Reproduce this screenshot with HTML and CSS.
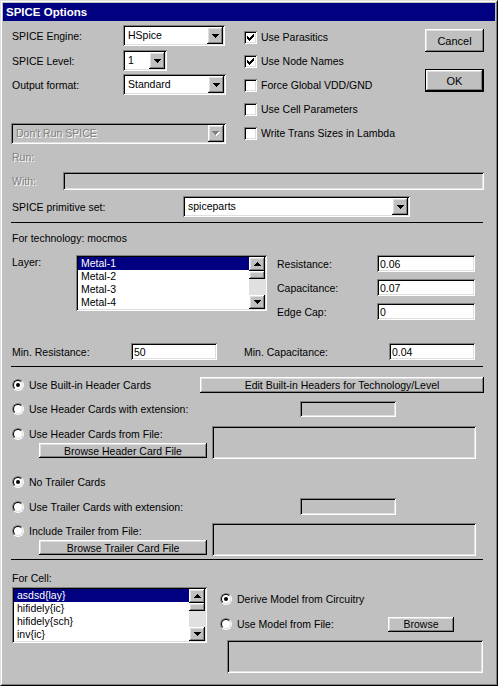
FILE: index.html
```html
<!DOCTYPE html>
<html>
<head>
<meta charset="utf-8">
<link rel="stylesheet" href="styles.css">
</head>
<body>
<div class="window">
<div class="frame">
  <div class="titlebar">SPICE Options</div>
  <div class="content">
    <div class="top">
      <div class="leftcol">
        <div class="frow h21">
          <span class="lbl w112">SPICE Engine:</span>
          <div class="combo sunk w102"><span class="val">HSpice</span><span class="drop raised"><svg width="7" height="4"><path d="M0 0h7v1h-1v1h-1v1h-1v1h-1v-1h-1v-1h-1v-1h-1z"/></svg></span></div>
        </div>
        <div class="frow h21 mt4">
          <span class="lbl w112">SPICE Level:</span>
          <div class="combo sunk w44"><span class="val">1</span><span class="drop raised"><svg width="7" height="4"><path d="M0 0h7v1h-1v1h-1v1h-1v1h-1v-1h-1v-1h-1v-1h-1z"/></svg></span></div>
        </div>
        <div class="frow h21 mt3">
          <span class="lbl w112">Output format:</span>
          <div class="combo sunk w103"><span class="val">Standard</span><span class="drop raised"><svg width="7" height="4"><path d="M0 0h7v1h-1v1h-1v1h-1v1h-1v-1h-1v-1h-1v-1h-1z"/></svg></span></div>
        </div>
        <div class="combo sunk disabled w215 dontrun"><span class="val">Don't Run SPICE</span><span class="drop raised"><svg width="8" height="5"><path class="hl" d="M1 1h7v1h-1v1h-1v1h-1v1h-1v-1h-1v-1h-1v-1h-1z"/><path d="M0 0h7v1h-1v1h-1v1h-1v1h-1v-1h-1v-1h-1v-1h-1z"/></svg></span></div>
      </div>
      <div class="checkcol">
        <div class="chk"><span class="box sunk"><svg width="7" height="7"><path d="M0 2h1v3h-1zM1 3h1v3h-1zM2 4h1v3h-1zM3 3h1v3h-1zM4 2h1v3h-1zM5 1h1v3h-1zM6 0h1v3h-1z"/></svg></span>Use Parasitics</div>
        <div class="chk"><span class="box sunk"><svg width="7" height="7"><path d="M0 2h1v3h-1zM1 3h1v3h-1zM2 4h1v3h-1zM3 3h1v3h-1zM4 2h1v3h-1zM5 1h1v3h-1zM6 0h1v3h-1z"/></svg></span>Use Node Names</div>
        <div class="chk"><span class="box sunk"></span>Force Global VDD/GND</div>
        <div class="chk"><span class="box sunk"></span>Use Cell Parameters</div>
        <div class="chk"><span class="box sunk"></span>Write Trans Sizes in Lambda</div>
      </div>
      <div class="btncol">
        <div class="btn raised cancel">Cancel</div>
        <div class="btn default okbtn"><span class="raised">OK</span></div>
      </div>
    </div>

    <div class="frow h14 mt5"><span class="lbl dis">Run:</span></div>
    <div class="frow h18 mt8">
      <span class="lbl dis w52">With:</span>
      <div class="field sunk disfield grow h18"></div>
    </div>
    <div class="frow h21 mt6">
      <span class="lbl w172">SPICE primitive set:</span>
      <div class="combo sunk w227"><span class="val">spiceparts</span><span class="drop raised"><svg width="7" height="4"><path d="M0 0h7v1h-1v1h-1v1h-1v1h-1v-1h-1v-1h-1v-1h-1z"/></svg></span></div>
    </div>
    <div class="sep mt5"></div>
    <div class="frow h14 mt8"><span class="lbl">For technology: mocmos</span></div>

    <div class="layer mt10">
      <span class="lbl w65 lh14">Layer:</span>
      <div class="list sunk w191">
        <div class="items">
          <div class="item sel">Metal-1</div>
          <div class="item">Metal-2</div>
          <div class="item">Metal-3</div>
          <div class="item">Metal-4</div>
        </div>
        <div class="sb">
          <span class="sbtn raised"><svg width="7" height="4"><path d="M3 0h1v1h1v1h1v1h1v1h-7v-1h1v-1h1v-1h1z"/></svg></span>
          <span class="thumb raised"></span>
          <span class="track"></span>
          <span class="sbtn raised"><svg width="7" height="4"><path d="M0 0h7v1h-1v1h-1v1h-1v1h-1v-1h-1v-1h-1v-1h-1z"/></svg></span>
        </div>
      </div>
      <div class="props">
        <div class="frow h17"><span class="lbl w101">Resistance:</span><div class="field sunk w98 h17"><span class="val">0.06</span></div></div>
        <div class="frow h17 mt7"><span class="lbl w101">Capacitance:</span><div class="field sunk w98 h17"><span class="val">0.07</span></div></div>
        <div class="frow h17 mt7"><span class="lbl w101">Edge Cap:</span><div class="field sunk w98 h17"><span class="val">0</span></div></div>
      </div>
    </div>

    <div class="frow h17 mt23">
      <span class="lbl w120">Min. Resistance:</span>
      <div class="field sunk w86 h17"><span class="val">50</span></div>
      <span class="lbl w146 ml26">Min. Capacitance:</span>
      <div class="field sunk w86 h17"><span class="val">0.04</span></div>
    </div>
    <div class="sep mt6"></div>

    <div class="frow h16 mt10">
      <div class="rlabel w189"><span class="radio"><i class="on"></i></span>Use Built-in Header Cards</div>
      <div class="btn raised w284 h16">Edit Built-in Headers for Technology/Level</div>
    </div>
    <div class="frow h16 mt8">
      <div class="rlabel w289"><span class="radio"><i></i></span>Use Header Cards with extension:</div>
      <div class="field sunk disfield w96 h16"></div>
    </div>
    <div class="fblock mt9">
      <div class="fleft">
        <div class="rlabel h16"><span class="radio"><i></i></span>Use Header Cards from File:</div>
        <div class="btn raised browse">Browse Header Card File</div>
      </div>
      <div class="field sunk disfield w264 h33"></div>
    </div>
    <div class="frow h16 mt15">
      <div class="rlabel"><span class="radio"><i class="on"></i></span>No Trailer Cards</div>
    </div>
    <div class="frow h17 mt8">
      <div class="rlabel w289"><span class="radio"><i></i></span>Use Trailer Cards with extension:</div>
      <div class="field sunk disfield w96 h17"></div>
    </div>
    <div class="fblock mt8">
      <div class="fleft">
        <div class="rlabel h16"><span class="radio"><i></i></span>Include Trailer from File:</div>
        <div class="btn raised browse">Browse Trailer Card File</div>
      </div>
      <div class="field sunk disfield w264 h33"></div>
    </div>
    <div class="sep mt3"></div>

    <div class="frow h14 mt11"><span class="lbl">For Cell:</span></div>
    <div class="cellblock mt2">
      <div class="list sunk w195 ml1">
        <div class="items">
          <div class="item sel">asdsd{lay}</div>
          <div class="item">hifidely{ic}</div>
          <div class="item">hifidely{sch}</div>
          <div class="item">inv{ic}</div>
        </div>
        <div class="sb">
          <span class="sbtn raised"><svg width="7" height="4"><path d="M3 0h1v1h1v1h1v1h1v1h-7v-1h1v-1h1v-1h1z"/></svg></span>
          <span class="thumb raised"></span>
          <span class="track"></span>
          <span class="sbtn raised"><svg width="7" height="4"><path d="M0 0h7v1h-1v1h-1v1h-1v1h-1v-1h-1v-1h-1v-1h-1z"/></svg></span>
        </div>
      </div>
      <div class="cellright">
        <div class="frow h16 mt4">
          <div class="rlabel"><span class="radio"><i class="on"></i></span>Derive Model from Circuitry</div>
        </div>
        <div class="frow h16 mt9">
          <div class="rlabel w169"><span class="radio"><i></i></span>Use Model from File:</div>
          <div class="btn raised w66 h15">Browse</div>
        </div>
        <div class="field sunk disfield w256 h33 mt8 ml8"></div>
      </div>
    </div>
  </div>
</div>
</div>
</body>
</html>
```
FILE: styles.css
```css
* { box-sizing: border-box; margin: 0; padding: 0; }
body {
  margin: 0;
  background: #c0c0c0;
  font-family: "Liberation Sans", Arial, sans-serif;
  font-size: 10.5px;
  color: #000;
}
.window {
  width: 498px;
  height: 686px;
  background: #c0c0c0;
  border: 1px solid;
  border-color: #dfdfdf #000 #000 #dfdfdf;
}
.frame {
  height: 100%;
  border: 1px solid;
  border-color: #fff #808080 #808080 #fff;
  padding: 1px;
}
.titlebar {
  height: 18px;
  background: #000080;
  color: #fff;
  font-family: "Liberation Sans", Arial, sans-serif;
  font-weight: bold;
  font-size: 11.5px;
  line-height: 18px;
  padding-left: 3px;
}
.content { padding: 0 11px 0 8px; }

.sunk { box-shadow: inset 1px 1px #808080, inset -1px -1px #fff, inset 2px 2px #000, inset -2px -2px #dfdfdf; }
.raised { box-shadow: inset -1px -1px #000, inset 1px 1px #fff, inset -2px -2px #808080, inset 2px 2px #dfdfdf; }

.top { display: flex; margin-top: 4px; height: 120px; }
.leftcol { width: 216px; flex: none; }
.frow { display: flex; align-items: center; }
.lbl { padding-left: 1px; white-space: nowrap; flex: none; }
.dis { color: #808080; text-shadow: 1px 1px #fff; }

.combo { display: flex; height: 21px; padding: 2px; background: #fff; flex: none; }
.combo .val { flex: 1; padding-left: 3px; line-height: 17px; white-space: nowrap; overflow: hidden; }
.combo .drop { width: 16px; height: 17px; background: #c0c0c0; display: flex; align-items: center; justify-content: center; flex: none; }
.drop svg, .sbtn svg { display: block; }
.combo.disabled { background: #c0c0c0; }
.combo.disabled .val { color: #808080; text-shadow: 1px 1px #fff; }
.combo.disabled .drop path { fill: #808080; }
.combo.disabled .drop path.hl { fill: #fff; }
.dontrun { margin-top: 28px; }

.checkcol { margin-left: 17px; width: 164px; flex: none; }
.chk { height: 24px; display: flex; align-items: center; gap: 4px; white-space: nowrap; }
.box { width: 13px; height: 13px; background: #fff; display: flex; align-items: center; justify-content: center; flex: none; }

.btncol { margin-left: auto; width: 59px; flex: none; }
.btn { display: flex; align-items: center; justify-content: center; background: #c0c0c0; white-space: nowrap; flex: none; }
.cancel { margin-top: 4px; height: 23px; font-size: 11px; }
.okbtn { margin-top: 17px; height: 23px; border: 1px solid #000; font-size: 11px; }
.okbtn span { width: 100%; height: 100%; display: flex; align-items: center; justify-content: center; }

.field { background: #fff; padding: 2px 3px; display: flex; align-items: center; flex: none; }
.disfield { background: #c0c0c0; }
.grow { flex: 1; }

.sep { height: 1px; background: #000; width: 472px; }

.layer { display: flex; align-items: flex-start; }
.lh14 { line-height: 14px; }
.list { height: 56px; padding: 2px; background: #fff; display: flex; flex: none; }
.items { flex: 1; }
.item { height: 13px; line-height: 13px; padding-left: 3px; white-space: nowrap; }
.item.sel { background: #000080; color: #fff; }
.sb { width: 16px; display: flex; flex-direction: column; flex: none; }
.sbtn { height: 14px; background: #c0c0c0; display: flex; align-items: center; justify-content: center; flex: none; }
.thumb { height: 8px; background: #c0c0c0; flex: none; }
.track { flex: 1; background: #e0e0e0; }
.props { margin-left: 9px; }

.rlabel { display: flex; align-items: center; gap: 5px; padding-left: 1px; white-space: nowrap; flex: none; }
.radio { width: 12px; height: 12px; border-radius: 50%; border: 1px solid; border-color: #808080 #fff #fff #808080; flex: none; }
.radio i { display: flex; align-items: center; justify-content: center; width: 10px; height: 10px; border-radius: 50%; border: 1px solid; border-color: #000 #dfdfdf #dfdfdf #000; background: #fff; }
.radio i.on::after { content: ""; width: 4px; height: 4px; border-radius: 50%; background: #000; }

.fblock { display: flex; align-items: flex-start; }
.fleft { width: 201px; flex: none; }
.browse { width: 168px; height: 15px; margin-left: 28px; margin-top: 1px; }

.cellblock { display: flex; align-items: flex-start; }
.cellright { margin-left: 12px; }

.w44 { width: 44px; } .w52 { width: 52px; } .w65 { width: 65px; } .w66 { width: 66px; }
.w86 { width: 86px; } .w96 { width: 96px; } .w98 { width: 98px; } .w101 { width: 101px; }
.w102 { width: 102px; } .w103 { width: 103px; } .w112 { width: 112px; } .w120 { width: 120px; }
.w146 { width: 146px; } .w169 { width: 169px; } .w172 { width: 172px; } .w189 { width: 189px; }
.w191 { width: 191px; } .w195 { width: 195px; } .w215 { width: 215px; } .w227 { width: 227px; }
.w256 { width: 256px; } .w264 { width: 264px; } .w284 { width: 284px; } .w289 { width: 289px; }
.h14 { height: 14px; } .h15 { height: 15px; } .h16 { height: 16px; } .h17 { height: 17px; }
.h18 { height: 18px; } .h21 { height: 21px; } .h33 { height: 33px; }
.mt2 { margin-top: 2px; } .mt3 { margin-top: 3px; } .mt4 { margin-top: 4px; } .mt5 { margin-top: 5px; }
.mt6 { margin-top: 6px; } .mt7 { margin-top: 7px; } .mt8 { margin-top: 8px; } .mt9 { margin-top: 9px; }
.mt10 { margin-top: 10px; } .mt11 { margin-top: 11px; } .mt15 { margin-top: 15px; } .mt23 { margin-top: 23px; }
.ml1 { margin-left: 1px; } .ml8 { margin-left: 8px; } .ml26 { margin-left: 26px; }
```
